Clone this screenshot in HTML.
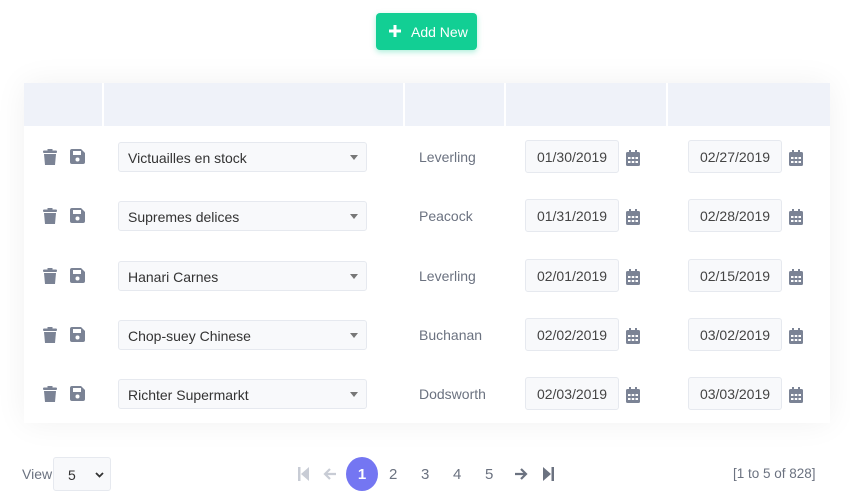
<!DOCTYPE html>
<html><head><style>
*{box-sizing:border-box;margin:0;padding:0}
body{width:850px;height:500px;background:#fff;font-family:"Liberation Sans",sans-serif;position:relative;overflow:hidden;color:#5a6270}
.btn{position:absolute;left:376px;top:13px;width:101px;height:37px;background:#12cf94;border-radius:4px;color:#fff;font-size:14px;line-height:38px;box-shadow:0 2px 6px rgba(18,207,148,.35)}
.btn span{position:absolute;left:35px}
.card{position:absolute;left:24px;top:83px;width:806px;height:340px;background:#fff;box-shadow:0 0 30px rgba(0,0,0,.06)}
.hd{position:absolute;left:0;top:0;width:806px;height:43px;background:#eff2f9}
.vl{position:absolute;top:0;width:2px;height:43px;background:#fff}
.sel{position:absolute;width:249px;height:30px;border:1px solid #e6e9ef;border-radius:3px;background:#f8f9fb;font-size:14px;color:#333;line-height:30px;padding-left:9px}
.sel:after{content:"";position:absolute;right:8px;top:12px;border:4.5px solid transparent;border-top:5px solid #777;border-bottom:0}
.nm{position:absolute;left:419px;font-size:14px;color:#6b7280}
.dt{position:absolute;width:94px;height:33px;border:1px solid #e6e9ef;border-radius:3px;background:#f8f9fb;font-size:14px;color:#444;line-height:33px;text-align:center}
.ic{position:absolute}
.pg{position:absolute;top:466px;font-size:15px;color:#6b7280}
</style></head><body>
<div class="btn"><svg style="position:absolute;left:13px;top:12px" width="12" height="12"><rect x="4.5" y="0" width="3" height="12" fill="#fff"/><rect x="0" y="4.5" width="12" height="3" fill="#fff"/></svg><span>Add New</span></div>
<div class="card"><div class="hd"></div>
<div class="vl" style="left:78px"></div><div class="vl" style="left:379px"></div><div class="vl" style="left:480px"></div><div class="vl" style="left:642px"></div>
</div>
<div id="rows"></div>
<script>
var d=[["Victuailles en stock","Leverling","01/30/2019","02/27/2019"],["Supremes delices","Peacock","01/31/2019","02/28/2019"],["Hanari Carnes","Leverling","02/01/2019","02/15/2019"],["Chop-suey Chinese","Buchanan","02/02/2019","03/02/2019"],["Richter Supermarkt","Dodsworth","02/03/2019","03/03/2019"]];
var h="";
var cal='<svg width="14" height="16" viewBox="0 0 14 16"><rect x="3" y="0" width="2" height="3" fill="#7b8395"/><rect x="9" y="0" width="2" height="3" fill="#7b8395"/><rect x="0" y="2" width="14" height="14" rx="1.5" fill="#7b8395"/><g fill="#fff"><rect x="2" y="7" width="2.5" height="2"/><rect x="5.75" y="7" width="2.5" height="2"/><rect x="9.5" y="7" width="2.5" height="2"/><rect x="2" y="11" width="2.5" height="2"/><rect x="5.75" y="11" width="2.5" height="2"/><rect x="9.5" y="11" width="2.5" height="2"/></g></svg>';
var trash='<svg width="14" height="16" viewBox="0 0 14 16"><rect x="0" y="1.5" width="14" height="2.5" rx="1" fill="#7b8395"/><rect x="4.5" y="0" width="5" height="2" fill="#7b8395"/><path d="M1 5h12l-1 11H2z" fill="#7b8395"/></svg>';
var save='<svg width="15" height="15" viewBox="0 0 15 15"><path d="M0 2a2 2 0 0 1 2-2h9l4 4v9a2 2 0 0 1-2 2H2a2 2 0 0 1-2-2z" fill="#7b8395"/><rect x="3" y="2" width="8" height="4" fill="#fff"/><circle cx="7.5" cy="10.5" r="2" fill="#fff"/></svg>';
for(var i=0;i<5;i++){var c=157+i*59.3;
h+='<div class="ic" style="left:43px;top:'+(c-8)+'px">'+trash+'</div>';
h+='<div class="ic" style="left:70px;top:'+(c-8)+'px">'+save+'</div>';
h+='<div class="sel" style="left:118px;top:'+(c-15)+'px">'+d[i][0]+'</div>';
h+='<div class="nm" style="top:'+(c-8)+'px">'+d[i][1]+'</div>';
h+='<div class="dt" style="left:525px;top:'+(c-17)+'px">'+d[i][2]+'</div>';
h+='<div class="ic" style="left:626px;top:'+(c-7)+'px">'+cal+'</div>';
h+='<div class="dt" style="left:688px;top:'+(c-17)+'px">'+d[i][3]+'</div>';
h+='<div class="ic" style="left:789px;top:'+(c-7)+'px">'+cal+'</div>';}
document.getElementById("rows").innerHTML=h;
</script>
<div class="pg" style="left:22px;font-size:14px">View</div>
<div style="position:absolute;left:53px;top:457px;width:58px;height:34px;border:1px solid #e6e9ef;border-radius:3px;background:#f8f9fb;font-size:14px;color:#333;line-height:34px;padding-left:14px">5<svg style="position:absolute;right:6px;top:14px" width="9" height="6"><path d="M1 1l3.5 3.5L8 1" stroke="#333" stroke-width="1.8" fill="none"/></svg></div>
<svg style="position:absolute;left:298px;top:467px" width="12" height="14"><rect x="0" y="0" width="2.5" height="14" fill="#c8ccd5"/><path d="M11 0v14L3 7z" fill="#c8ccd5"/></svg>
<svg style="position:absolute;left:323px;top:467px" width="14" height="14"><path d="M13 7H2M7 2L2 7l5 5" stroke="#c8ccd5" stroke-width="2.2" fill="none"/></svg>
<div style="position:absolute;left:346px;top:457px;width:32px;height:34px;border-radius:50%;background:#7476f2;color:#fff;font-size:15px;line-height:35px;text-align:center;font-weight:bold">1</div>
<div class="pg" style="left:389px">2</div><div class="pg" style="left:421px">3</div><div class="pg" style="left:453px">4</div><div class="pg" style="left:485px">5</div>
<svg style="position:absolute;left:514px;top:467px" width="14" height="14"><path d="M1 7h11M7 2l5 5-5 5" stroke="#6b7280" stroke-width="2.2" fill="none"/></svg>
<svg style="position:absolute;left:542px;top:467px" width="12" height="14"><path d="M1 0v14l8-7z" fill="#6b7280"/><rect x="9.5" y="0" width="2.5" height="14" fill="#6b7280"/></svg>
<div class="pg" style="left:733px;font-size:13.5px">[1 to 5 of 828]</div>
</body></html>
